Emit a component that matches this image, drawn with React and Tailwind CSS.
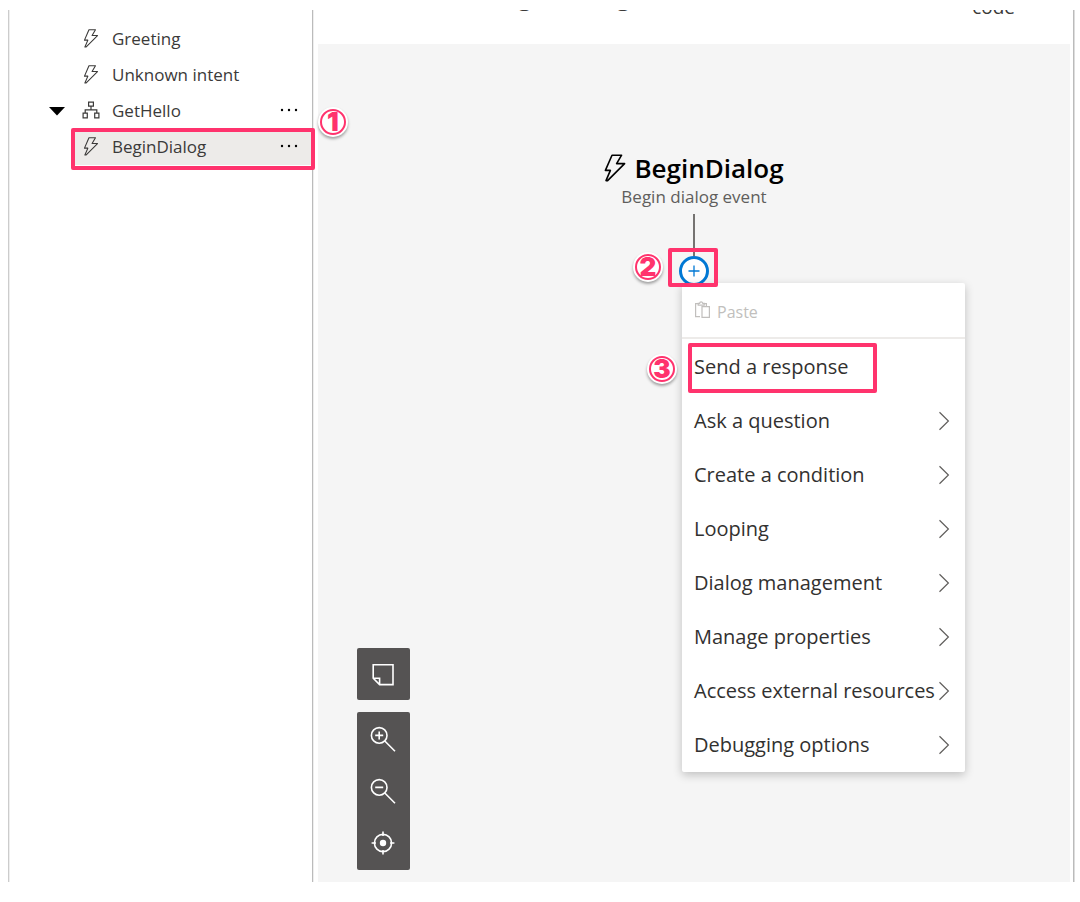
const menuItems = [
  'Ask a question',
  'Create a condition',
  'Looping',
  'Dialog management',
  'Manage properties',
  'Access external resources',
  'Debugging options',
];

function Bolt({ className, strokeWidth }) {
  return (
    <svg viewBox="0 0 22 28" className={className} fill="none" stroke="currentColor" strokeWidth={strokeWidth} aria-hidden="true">
      <path d="M8 1.2 H17.6 L12.6 9.6 H20.6 L3.6 26.6 H2 L6.4 16.4 H1.4 Z" strokeLinejoin="round" />
    </svg>
  );
}

function Tree({ className }) {
  return (
    <svg viewBox="0 0 18 18" className={className} fill="none" stroke="currentColor" strokeWidth="1.2" aria-hidden="true">
      <path d="M6.6 1.2h4.8v4H6.6zM1.1 12.2h4.2v4.6H1.1zM12.7 12.2h4.2v4.6h-4.2zM9 5.2v3.6M3.2 12.2V8.8h11.6v3.4" />
    </svg>
  );
}

function Dots() {
  return (
    <svg viewBox="0 0 18 4" className="h-1 w-[18px]" fill="currentColor" aria-hidden="true">
      <circle cx="2" cy="2" r="1.2" />
      <circle cx="9" cy="2" r="1.2" />
      <circle cx="16" cy="2" r="1.2" />
    </svg>
  );
}

function StepBadge({ n, className }) {
  return (
    <span className={`absolute z-30 flex size-[30px] items-center justify-center rounded-full bg-white shadow-[0_2px_3px_rgba(0,0,0,0.35)] ${className}`}>
      <span className="flex size-[26px] items-center justify-center rounded-full border-2 border-[#ff336d] font-['Inter',sans-serif] text-[26px] leading-none font-black text-[#ff336d]">
        {n}
      </span>
    </span>
  );
}

function Frame({ className }) {
  return <span className={`pointer-events-none absolute z-20 rounded-xs border-4 border-[#ff336d] ${className}`} />;
}

function TreeRow({ label, dialog, more, selected, children }) {
  return (
    <li className="relative flex h-9 items-center pl-[65px]">
      {dialog && (
        <button type="button" aria-label={`Collapse ${label}`} className="absolute left-10 flex h-9 w-4 items-center">
          <svg viewBox="0 0 16 9" className="h-[9px] w-4" aria-hidden="true">
            <path d="M0 0H16L8 8.5Z" fill="black" />
          </svg>
        </button>
      )}
      <div className={`flex h-9 flex-1 items-center pr-[11px] pl-2 ${selected ? 'bg-[#edebe9]' : ''}`}>
        <a href={`#${label}`} className="flex flex-1 items-center gap-3 text-[17px] leading-6">
          {dialog ? <Tree className="mb-0.5 size-[18px]" /> : <Bolt className="mb-0.5 h-[19px] w-[18px]" strokeWidth="1.6" />}
          {label}
        </a>
        {more && (
          <button type="button" aria-label={`More options for ${label}`} className="flex h-9 w-6 items-center justify-center pb-0.5 text-black">
            <Dots />
          </button>
        )}
      </div>
      {children}
    </li>
  );
}

function Chevron() {
  return (
    <svg viewBox="0 0 12 20" className="h-5 w-3" fill="none" stroke="#605e5c" strokeWidth="1.2" aria-hidden="true">
      <path d="M1.5 1.2 10.4 10 1.5 18.8" />
    </svg>
  );
}

function InsertMenu() {
  return (
    <div role="menu" className="absolute top-[27px] left-[3px] z-10 w-[283px] rounded-xs bg-white text-left text-[20px] leading-7 text-[#323130] shadow-[0_3px_10px_rgba(0,0,0,0.22)]">
      <button type="button" role="menuitem" disabled className="flex h-14 w-full items-center gap-1.5 border-b-2 border-[#edebe9] pt-1 pl-3 text-base text-[#c1bfbd]">
        <svg viewBox="0 0 17 18" className="mb-1 h-[18px] w-[17px]" fill="none" stroke="currentColor" strokeWidth="1.2" aria-hidden="true">
          <path d="M6 15.6H1.6V2.6H4.2M10.2 2.6H12.4V5M4.2 4.2V2.4H5.6Q5.8.9 7.1.9T8.8 2.4H10.2V4.2ZM8 5.6H15.4V16.4H8Z" />
        </svg>
        Paste
      </button>
      <div className="pt-px">
        <div className="relative">
          <button type="button" role="menuitem" className="flex h-[54px] w-full items-center px-3">
            Send a response
          </button>
          <Frame className="top-[3px] left-1.5 h-[50px] w-[189px]" />
          <StepBadge n="3" className="top-[14px] left-[-35px]" />
        </div>
        {menuItems.map((label) => (
          <button key={label} type="button" role="menuitem" className="flex h-[54px] w-full items-center justify-between pr-[15px] pl-3">
            <span className="whitespace-nowrap">{label}</span>
            <Chevron />
          </button>
        ))}
      </div>
    </div>
  );
}

function ToolButton({ label, children }) {
  return (
    <button type="button" aria-label={label} className="flex h-[52px] w-full items-center justify-center pr-px">
      <svg viewBox="0 0 26 26" className="size-[26px]" fill="none" stroke="white" strokeWidth="1.6" aria-hidden="true">
        {children}
      </svg>
    </button>
  );
}

function Toolbar() {
  return (
    <div className="absolute bottom-3 left-[39px] flex w-[53px] flex-col gap-3">
      <div className="rounded-xs bg-[#555353]">
        <ToolButton label="Add note">
          <path d="M3.2 3.8H23V23.6H9.6L3.2 17.2ZM3.2 17.2H9.6V23.6" />
        </ToolButton>
      </div>
      <div className="rounded-xs bg-[#555353] py-px">
        <ToolButton label="Zoom in">
          <circle cx="9.2" cy="9.4" r="7.8" />
          <path d="M5.2 9.4H13.2M9.2 5.4V13.4M14.8 15 25 25.2" />
        </ToolButton>
        <ToolButton label="Zoom out">
          <circle cx="9.2" cy="9.4" r="7.8" />
          <path d="M5.2 9.4H13.2M14.8 15 25 25.2" />
        </ToolButton>
        <ToolButton label="Center view">
          <circle cx="13" cy="13" r="8.6" />
          <circle cx="13" cy="13" r="3.2" fill="white" stroke="none" />
          <path d="M13 1.6V6M13 20V24.4M1.6 13H6M20 13H24.4" />
        </ToolButton>
      </div>
    </div>
  );
}

export default function App() {
  return (
    <div className="flex h-screen flex-col bg-white pt-2.5 pr-1.5 pb-5 pl-2 font-['Open_Sans','Noto_Sans',sans-serif] text-[#3b3a39]">
      <div className="flex min-h-0 flex-1 border-r border-l border-r-[#bbbbbb] border-l-[#cccccc] shadow-[inset_1px_0_#eeeeee,1px_0_#dddddd]">
        <nav aria-label="Dialogs" className="w-[304px] shrink-0 border-r border-[#bbbbbb] pt-[11px] shadow-[1px_0_#eeeeee]">
          <ul>
            <TreeRow label="Greeting" />
            <TreeRow label="Unknown intent" />
            <TreeRow label="GetHello" dialog more />
            <TreeRow label="BeginDialog" more selected>
              <Frame className="-top-px -right-[3px] h-[42px] w-[244px]" />
              <StepBadge n="1" className="-top-[22px] -right-9" />
            </TreeRow>
          </ul>
        </nav>
        <main className="flex min-w-0 flex-1 flex-col pr-[3px] pl-[5px]">
          <header className="flex h-[34px] shrink-0 items-start justify-between overflow-hidden pr-[55px] pl-[169px]">
            <h1 className="-mt-[31px] text-[25px] leading-8 font-semibold">BeginDialog</h1>
            <a href="#code" className="-mt-[17px] text-[19px] leading-7">
              code
            </a>
          </header>
          <section className="relative flex flex-1 flex-col items-center bg-[#f5f5f5] pt-[108px]">
            <h2 className="flex items-center gap-2 text-[26px] leading-8 font-semibold text-black">
              <Bolt className="h-7 w-[22px]" strokeWidth="1.6" />
              BeginDialog
            </h2>
            <p className="text-[17px] leading-[26px] text-[#605e5c]">Begin dialog event</p>
            <div className="mt-1 h-[42px] w-0.5 bg-[#757371]" />
            <div className="relative">
              <button type="button" aria-label="Add action" className="flex size-[30px] items-center justify-center rounded-full border-3 border-[#0078d4] bg-white text-[#0078d4]">
                <svg viewBox="0 0 12 12" className="size-3" stroke="currentColor" strokeWidth="1.3" aria-hidden="true">
                  <path d="M6 0.5V11.5M0.5 6H11.5" />
                </svg>
              </button>
              <Frame className="-top-2 -left-[11px] h-[39px] w-[50px]" />
              <StepBadge n="2" className="-top-1 left-[-46px]" />
              <InsertMenu />
            </div>
            <Toolbar />
          </section>
        </main>
      </div>
    </div>
  );
}
